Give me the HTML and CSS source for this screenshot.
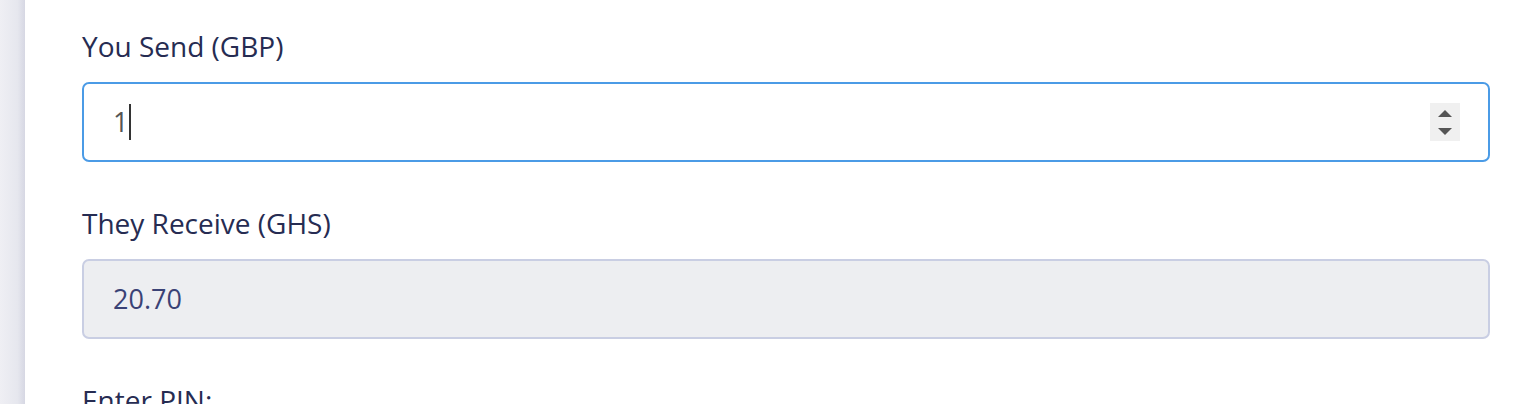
FILE: index.html
```html
<!DOCTYPE html>
<html>
<head>
<meta charset="utf-8">
<link rel="stylesheet" href="styles.css">
</head>
<body>
<div class="sidebar"></div>
<main class="main">
  <div class="field">
    <label class="label">You Send (GBP)</label>
    <div class="input input-active">
      <span class="value">1</span><span class="caret"></span>
      <span class="spacer"></span>
      <span class="spinner">
        <span class="arrow-up"></span>
        <span class="arrow-down"></span>
      </span>
    </div>
  </div>
  <div class="field">
    <label class="label">They Receive (GHS)</label>
    <div class="input input-readonly">
      <span class="value value-ro">20.70</span>
    </div>
  </div>
  <div class="field">
    <label class="label">Enter PIN:</label>
  </div>
</main>
</body>
</html>
```
FILE: styles.css
```css
html, body {
  margin: 0;
  padding: 0;
  height: 100%;
  overflow: hidden;
  background: #ffffff;
}
body {
  display: flex;
  font-family: "Open Sans", "Liberation Sans", sans-serif;
}
.sidebar {
  width: 25px;
  flex: none;
  background: linear-gradient(to right, #efeff4 0%, #e6e7ee 70%, #d6d7e3 100%);
}
.main {
  flex: 1;
  padding: 28px 26px 0 57px;
}
.field {
  margin-bottom: 43px;
}
.label {
  display: block;
  font-size: 28px;
  line-height: 36px;
  color: #262c52;
  margin-bottom: 18px;
}
.input {
  box-sizing: border-box;
  height: 80px;
  border-radius: 7px;
  border: 2px solid #4b9be6;
  display: flex;
  align-items: center;
  padding: 0 28px 0 29px;
  font-size: 27px;
}
.input-readonly {
  background: #edeef1;
  border-color: #c9cee3;
}
.value {
  color: #555555;
  line-height: 36px;
}
.value-ro {
  color: #3a4276;
}
.caret {
  width: 1.5px;
  height: 36px;
  background: #333333;
  margin-left: 1px;
}
.spacer {
  flex: 1;
}
.spinner {
  width: 30px;
  height: 38px;
  background: #f0f0f0;
  display: flex;
  flex-direction: column;
  align-items: center;
  justify-content: center;
  gap: 11px;
}
.arrow-up, .arrow-down {
  width: 0;
  height: 0;
  border-left: 7px solid transparent;
  border-right: 7px solid transparent;
}
.arrow-up {
  border-bottom: 7px solid #555555;
}
.arrow-down {
  border-top: 7px solid #555555;
}
```
